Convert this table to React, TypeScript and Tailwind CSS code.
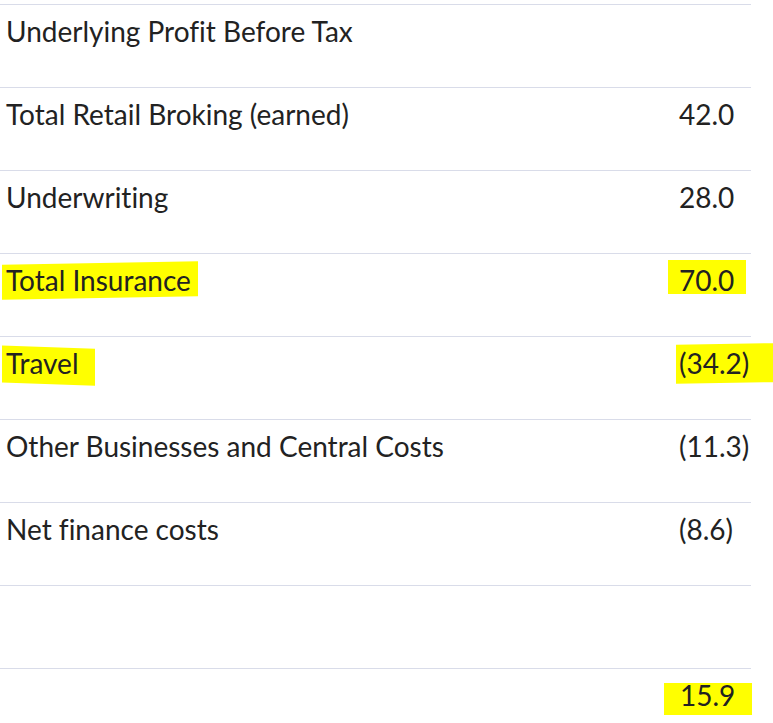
const rows: { label: string; value: string; hl?: string }[] = [
  { label: "Underlying Profit Before Tax", value: "" },
  { label: "Total Retail Broking (earned)", value: "42.0" },
  { label: "Underwriting", value: "28.0" },
  { label: "Total Insurance", value: "70.0", hl: "ins" },
  { label: "Travel", value: "(34.2)", hl: "travel" },
  { label: "Other Businesses and Central Costs", value: "(11.3)" },
  { label: "Net finance costs", value: "(8.6)" },
  { label: "", value: "" },
];

// marker strokes, drawn behind the text
function Marker({ kind }: { kind: string }) {
  if (kind === "ins-label")
    return <span className="absolute left-[-4px] right-[-7px] top-[0px] bottom-[-1px] bg-[#ffff00] -z-10 skew-y-[-1deg]" />;
  if (kind === "ins-value")
    return <span className="absolute left-[-11px] right-[-12px] top-[-3px] bottom-[3px] bg-[#ffff00] -z-10" />;
  if (kind === "travel-label")
    return <span className="absolute left-[-4px] right-[-16px] top-[1px] bottom-[-4px] bg-[#ffff00] -z-10 skew-y-[2deg]" />;
  if (kind === "travel-value")
    return <span className="absolute left-[-3px] right-[-24px] top-[-2px] bottom-[-3px] bg-[#ffff00] -z-10 skew-y-[-1deg]" />;
  if (kind === "total")
    return <span className="absolute left-[-16px] right-[-17px] top-[5px] bottom-[-3px] bg-[#ffff00] -z-10" />;
  return null;
}

export default function App() {
  return (
    <div
      className="bg-white min-h-[723px] pt-[4px] text-[#222] isolate [font-variant-ligatures:none]"
      style={{ fontFamily: "Lato, 'Noto Sans', sans-serif" }}
    >
      <div className="w-[751px] border-t border-[#d9dce9]">
        {rows.map((r, i) => (
          <div key={i} className="flex h-[83px] border-b border-[#d9dce9] pt-[5px] text-[28px] leading-[42px]">
            <div className="w-[679px] pl-[6px]">
              <span className="relative">
                {r.hl && <Marker kind={`${r.hl}-label`} />}
                {r.label}
              </span>
            </div>
            <div className="flex-1">
              <span className="relative">
                {r.hl && <Marker kind={`${r.hl}-value`} />}
                {r.value}
              </span>
            </div>
          </div>
        ))}
        <div className="flex pt-[5px] text-[28px] leading-[42px]">
          <div className="w-[679px]" />
          <div className="flex-1 pl-[1px]">
            <span className="relative">
              <Marker kind="total" />
              15.9
            </span>
          </div>
        </div>
      </div>
    </div>
  );
}
